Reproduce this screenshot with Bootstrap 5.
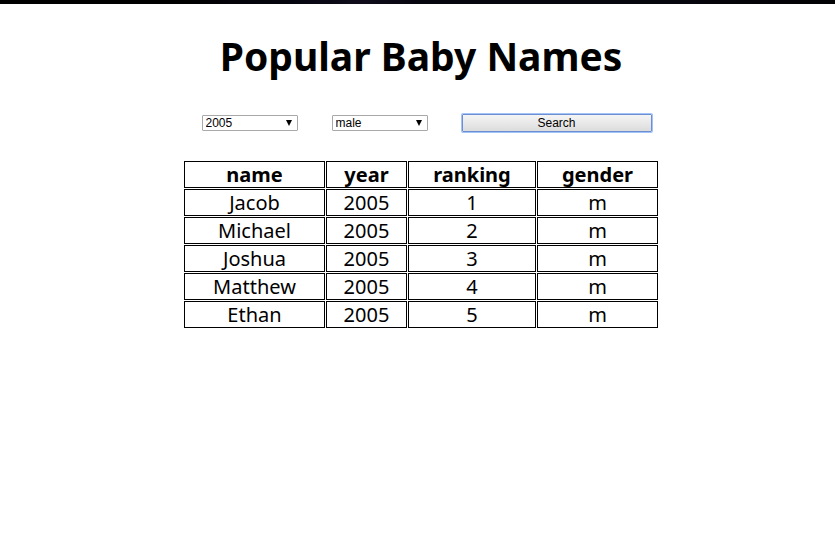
<!DOCTYPE html>
<html lang="en">
<head>
<meta charset="utf-8">
<meta name="viewport" content="width=device-width, initial-scale=1">
<title>Popular Baby Names</title>
<link href="https://cdn.jsdelivr.net/npm/bootstrap@5.3.0/dist/css/bootstrap.min.css" rel="stylesheet">
<style>
body { font-family: "Noto Sans", "Open Sans", sans-serif; color: #000; background: #fff; }
main { padding-left: 7px; }
.top-strip { height: 4px; background: linear-gradient(90deg, #000 20%, #05050f 35%, #100c1c 43%, #06060f 50%, #06060d 80%, #020204); }
h1 { font-size: 39px; line-height: 56px; font-weight: 700; }
.search-form { gap: 34px; padding-left: 11px; margin-top: 30px; font-family: "Liberation Sans", Arial, sans-serif; font-size: 12px; }
.pick { width: 96px; height: 16px; border: 1px solid #a9a9a9; border-radius: 1px; background: #fff; position: relative; }
.pick select { appearance: none; border: 0; background: transparent; padding: 0 3px; width: 100%; height: 14px; line-height: 14px; color: #000; }
.pick svg { position: absolute; right: 5px; top: 4px; pointer-events: none; }
.go { width: 190px; height: 18px; line-height: 16px; padding: 0; color: #000; border: 1px solid #6b8fd0; box-shadow: 0 0 0 1px #a3c2f8; background: linear-gradient(#f5f5f5, #dcdcdc); border-radius: 1px; }
.names { width: 476px; margin-top: 28px; border-collapse: separate; border-spacing: 1px; font-size: 20px; line-height: 25px; text-align: center; }
.names th, .names td { border: 1px solid #000; padding: 0; }
</style>
<script src="https://cdn.jsdelivr.net/npm/bootstrap@5.3.0/dist/js/bootstrap.bundle.min.js"></script>
</head>
<body>
<div class="top-strip"></div>
<main class="d-flex flex-column align-items-center">
<h1 class="mb-0 mt-4">Popular Baby Names</h1>
<form class="search-form d-flex align-items-center">
<div class="pick d-flex"><select aria-label="Year"><option>2005</option></select><svg width="6" height="6"><path d="M0 0h6L3 6z"/></svg></div>
<div class="pick d-flex"><select aria-label="Gender"><option>male</option></select><svg width="6" height="6"><path d="M0 0h6L3 6z"/></svg></div>
<button type="button" class="go">Search</button>
</form>
<table class="names">
<colgroup><col style="width:141px"><col style="width:81px"><col style="width:128px"><col style="width:121px"></colgroup>
<thead><tr><th scope="col">name</th><th scope="col">year</th><th scope="col">ranking</th><th scope="col">gender</th></tr></thead>
<tbody>
<tr><td>Jacob</td><td>2005</td><td>1</td><td>m</td></tr>
<tr><td>Michael</td><td>2005</td><td>2</td><td>m</td></tr>
<tr><td>Joshua</td><td>2005</td><td>3</td><td>m</td></tr>
<tr><td>Matthew</td><td>2005</td><td>4</td><td>m</td></tr>
<tr><td>Ethan</td><td>2005</td><td>5</td><td>m</td></tr>
</tbody>
</table>
</main>
</body>
</html>
